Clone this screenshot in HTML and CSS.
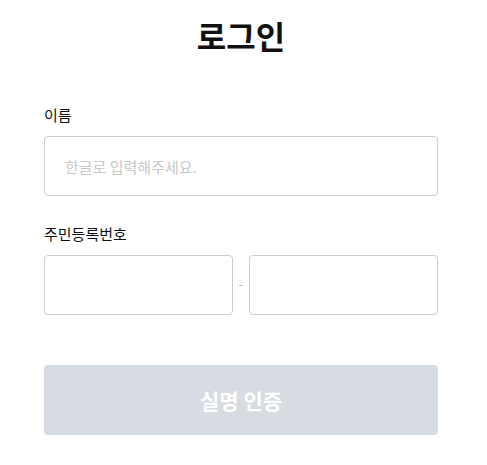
FILE: index.html
```html
<!DOCTYPE html>
<html>

<head>
    <title>로그인</title>
    <meta name="viewport" content="width=device-width, initial-scale=1">
    <link rel="stylesheet" href="styles.css">
</head>

<body>

    <div class="login-container">
        <h1>로그인</h1>

        <form id="auth-form">
            <label for="name">이름</label>
            <input type="text" id="name" name="name" placeholder="한글로 입력해주세요.">

            <label for="rrn-front">주민등록번호</label>
            <div class="rrn-row">
                <input type="text" id="rrn-front" name="rrn-front">
                <span class="rrn-dash">-</span>
                <input type="password" id="rrn-back" name="rrn-back">
            </div>

            <button type="submit" id="verify-button" disabled>실명 인증</button>
        </form>
    </div>

</body>

</html>
```

FILE: styles.css
```css
body {
    margin: 0;
    background-color: #fff;
    font-family: "Noto Sans CJK KR", "Noto Sans", sans-serif;
    color: #111;
}

.login-container {
    width: 394px;
    margin-left: 44px;
    padding-top: 12px;
}

h1 {
    margin: 0 0 47px 0;
    text-align: center;
    font-size: 32px;
    font-weight: 700;
    line-height: 46px;
}

label {
    display: block;
    font-size: 15px;
    line-height: 20px;
    margin-bottom: 11px;
}

input[type="text"],
input[type="password"] {
    box-sizing: border-box;
    width: 100%;
    height: 60px;
    padding: 0 20px;
    border: 1px solid #ccc;
    border-radius: 4px;
    font-size: 15px;
    font-family: inherit;
    margin-bottom: 28px;
    outline: none;
}

input::placeholder {
    color: #c8c8c8;
}

.rrn-row {
    display: flex;
    align-items: center;
    gap: 4px;
}

.rrn-row input[type="text"],
.rrn-row input[type="password"] {
    flex: 1;
    margin-bottom: 0;
}

.rrn-dash {
    width: 8px;
    padding-bottom: 4px;
    text-align: center;
    color: #bbb;
    font-size: 14px;
}

#verify-button {
    display: block;
    width: 100%;
    height: 70px;
    margin-top: 50px;
    border: none;
    border-radius: 4px;
    background-color: #d7dce2;
    color: #fff;
    font-size: 21px;
    font-weight: 700;
    font-family: inherit;
}
```
